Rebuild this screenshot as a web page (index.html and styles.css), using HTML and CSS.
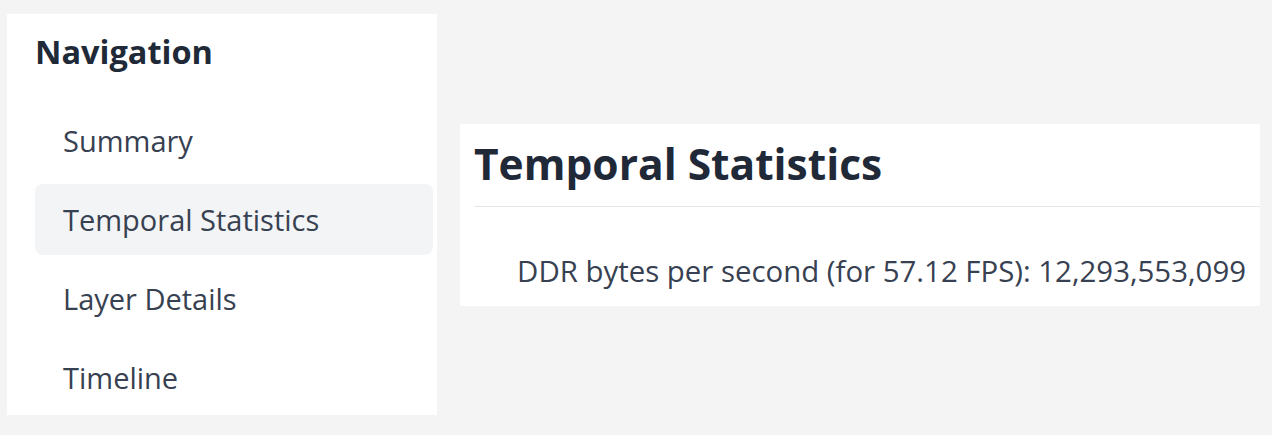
FILE: index.html
```html
<!DOCTYPE html>
<html lang="en">
<head>
<meta charset="utf-8">
<title>Temporal Statistics</title>
<link rel="stylesheet" href="styles.css">
</head>
<body>
<div class="page">
  <aside class="sidebar">
    <h2 class="nav-title">Navigation</h2>
    <nav class="nav-list">
      <a class="nav-item" href="#summary">Summary</a>
      <a class="nav-item active" href="#temporal">Temporal Statistics</a>
      <a class="nav-item" href="#layers">Layer Details</a>
      <a class="nav-item" href="#timeline">Timeline</a>
    </nav>
  </aside>
  <main class="card">
    <div class="card-head">
      <h1 class="card-title">Temporal Statistics</h1>
    </div>
    <p class="stat">DDR bytes per second (for 57.12 FPS): 12,293,553,099</p>
  </main>
</div>
</body>
</html>
```

FILE: styles.css
```css
html, body {
  margin: 0;
  padding: 0;
  background: #ffffff;
}

body {
  font-family: "Open Sans", "Noto Sans", sans-serif;
  color: #374151;
}

.page {
  box-sizing: border-box;
  width: 1272px;
  height: 435px;
  background: #f4f4f5;
  padding: 14px 12px 20px 7px;
  display: flex;
  align-items: center;
  gap: 23px;
}

.sidebar {
  box-sizing: border-box;
  width: 430px;
  height: 401px;
  background: #ffffff;
  padding: 16px 4px 0 28px;
  overflow: hidden;
  flex-shrink: 0;
}

.nav-title {
  margin: 0 0 31px 0;
  font-size: 32.5px;
  line-height: 44px;
  font-weight: 700;
  color: #1f2937;
}

.nav-list {
  display: flex;
  flex-direction: column;
  gap: 8px;
}

.nav-item {
  display: flex;
  align-items: center;
  height: 71px;
  padding-left: 28px;
  border-radius: 8px;
  font-size: 29px;
  color: #374151;
  text-decoration: none;
}

.nav-item.active {
  background: #f3f4f6;
}

.card {
  box-sizing: border-box;
  width: 800px;
  height: 182px;
  background: #ffffff;
  display: flex;
  flex-direction: column;
}

.card-head {
  margin-left: 14px;
  padding-top: 14px;
  padding-bottom: 16px;
  border-bottom: 1px solid #e5e7eb;
}

.card-title {
  margin: 0;
  font-size: 42.5px;
  line-height: 52px;
  font-weight: 700;
  color: #1f2937;
}

.stat {
  margin: 44px 14px 0 0;
  text-align: right;
  font-size: 29.4px;
  line-height: 40px;
  color: #374151;
}
```
